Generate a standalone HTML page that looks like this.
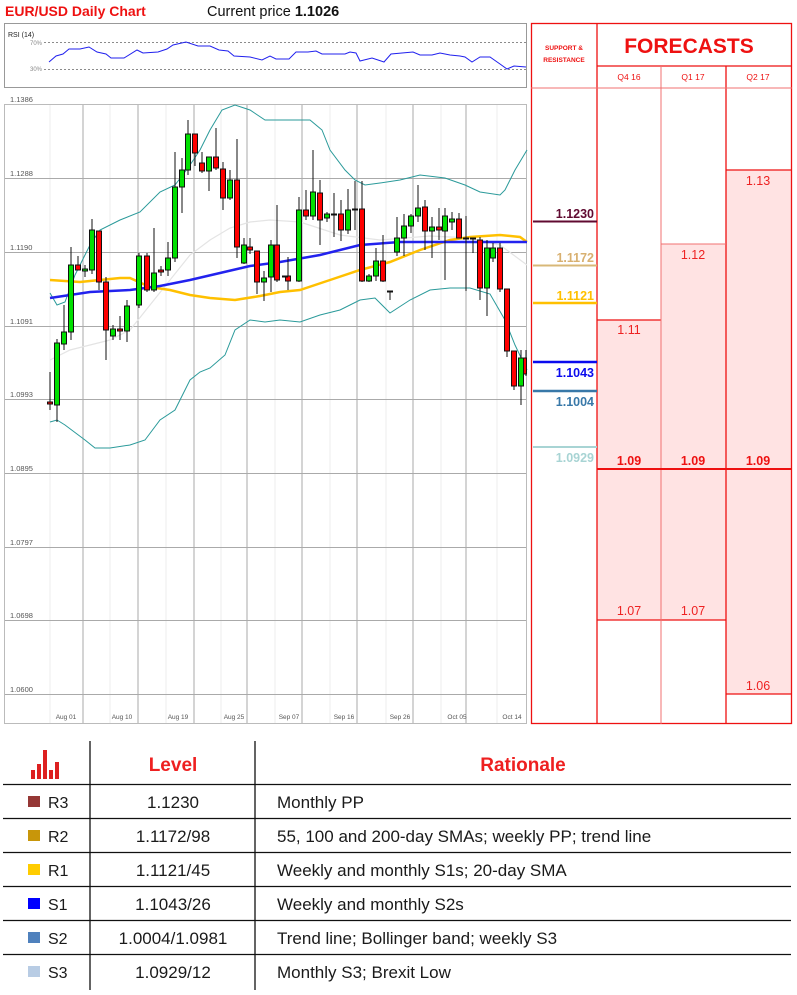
<!DOCTYPE html>
<html><head><meta charset="utf-8"><style>
body{margin:0;background:#fff;width:797px;height:995px;overflow:hidden;font-family:"Liberation Sans",sans-serif}
svg{display:block}
</style></head><body>
<svg width="797" height="995" viewBox="0 0 797 995" xmlns="http://www.w3.org/2000/svg" font-family="Liberation Sans, sans-serif">
<rect width="797" height="995" fill="#fff"/>
<text x="5" y="16" font-size="14" font-weight="bold" fill="#ee1111">EUR/USD Daily Chart</text>
<text x="207" y="16" font-size="14.5" fill="#111">Current price <tspan font-weight="bold">1.1026</tspan></text>
<!-- RSI -->
<rect x="4.5" y="23.5" width="522" height="64" fill="#fff" stroke="#999"/>
<text x="8" y="37" font-size="7" fill="#222">RSI (14)</text>
<text x="30" y="45" font-size="6" fill="#888">70%</text>
<text x="30" y="71" font-size="6" fill="#888">30%</text>
<line x1="44" y1="42.5" x2="526" y2="42.5" stroke="#666" stroke-dasharray="2,2" stroke-width="0.7"/>
<line x1="44" y1="69.5" x2="526" y2="69.5" stroke="#666" stroke-dasharray="2,2" stroke-width="0.7"/>
<polyline fill="none" stroke="#2020ee" stroke-width="1" points="49,62 56,56 63,54 69,49 80,49 89,47 97,52 106,54 111,58 124,58 137,50 143,53 158,52 167,49 173,45 186,42 198,46 210,46 219,50 228,51 234,56 250,57 262,60 270,56 276,59 289,59 296,52 308,52 316,51 322,54 345,54 350,52 356,53 360,61 372,58 384,62 391,54 413,52 420,55 432,55 440,53 450,55 460,56 465,57 472,62 480,57 490,57 500,64 507,69 514,66 526,67"/>
<!-- chart frame -->
<rect x="4.5" y="104.5" width="522" height="619" fill="#fff" stroke="#bbb"/>
<g stroke="#eee" stroke-width="1">
<line x1="50" y1="105" x2="50" y2="723"/><line x1="110" y1="105" x2="110" y2="723"/><line x1="166" y1="105" x2="166" y2="723"/><line x1="221" y1="105" x2="221" y2="723"/><line x1="275" y1="105" x2="275" y2="723"/><line x1="330" y1="105" x2="330" y2="723"/><line x1="386" y1="105" x2="386" y2="723"/><line x1="441" y1="105" x2="441" y2="723"/><line x1="497" y1="105" x2="497" y2="723"/>
</g>
<g stroke="#aaa" stroke-width="1">
<line x1="83" y1="105" x2="83" y2="723"/><line x1="138" y1="105" x2="138" y2="723"/><line x1="194" y1="105" x2="194" y2="723"/><line x1="247" y1="105" x2="247" y2="723"/><line x1="302" y1="105" x2="302" y2="723"/><line x1="357" y1="105" x2="357" y2="723"/><line x1="413" y1="105" x2="413" y2="723"/><line x1="466" y1="105" x2="466" y2="723"/>
<line x1="5" y1="178.5" x2="526" y2="178.5"/><line x1="5" y1="252.5" x2="526" y2="252.5"/><line x1="5" y1="326.5" x2="526" y2="326.5"/><line x1="5" y1="399.5" x2="526" y2="399.5"/><line x1="5" y1="473.5" x2="526" y2="473.5"/><line x1="5" y1="547.5" x2="526" y2="547.5"/><line x1="5" y1="620.5" x2="526" y2="620.5"/><line x1="5" y1="694.5" x2="526" y2="694.5"/>
</g>
<g font-size="7.5" fill="#555">
<text x="10" y="102">1.1386</text><text x="10" y="176">1.1288</text><text x="10" y="250">1.1190</text><text x="10" y="324">1.1091</text><text x="10" y="397">1.0993</text><text x="10" y="471">1.0895</text><text x="10" y="545">1.0797</text><text x="10" y="618">1.0698</text><text x="10" y="692">1.0600</text>
</g>
<g font-size="6.5" fill="#555" text-anchor="middle">
<text x="66" y="719">Aug 01</text><text x="122" y="719">Aug 10</text><text x="178" y="719">Aug 19</text><text x="234" y="719">Aug 25</text><text x="289" y="719">Sep 07</text><text x="344" y="719">Sep 16</text><text x="400" y="719">Sep 26</text><text x="457" y="719">Oct 05</text><text x="512" y="719">Oct 14</text>
</g>
<!-- lines -->
<polyline fill="none" stroke="#e4e4e4" stroke-width="1.2" points="50,360 70,350 90,345 110,340 130,330 150,305 170,280 190,255 210,240 230,228 250,222 270,220 300,222 340,235 380,240 430,236 470,238 500,245 527,265"/>
<polyline fill="none" stroke="#2a9a9a" stroke-width="1" points="50,293 57,305 65,302 75,275 90,245 100,230 120,220 140,212 160,192 175,185 188,168 200,150 210,130 222,110 235,105 250,110 265,120 290,120 310,120 322,130 330,150 345,170 355,180 365,185 380,183 400,180 420,175 445,178 465,185 480,192 500,195 505,190 515,170 527,150"/>
<polyline fill="none" stroke="#2a9a9a" stroke-width="1" points="50,422 57,420 65,425 85,440 95,448 110,448 130,445 145,440 160,420 175,410 190,380 200,372 210,368 225,355 235,330 250,320 265,322 280,320 300,322 320,315 340,310 350,305 360,300 375,298 390,313 410,300 430,290 450,288 470,288 490,294 505,320 515,345 527,370"/>
<polyline fill="none" stroke="#ffc000" stroke-width="2.5" points="50,280 80,282 100,280 120,278 130,278 150,287 170,290 190,295 210,298 235,300 260,296 280,292 300,290 330,280 360,270 390,262 420,250 450,240 470,237 500,235 520,237 527,242"/>
<polyline fill="none" stroke="#2222ee" stroke-width="2.5" points="50,298 90,292 130,290 160,286 190,280 220,273 250,266 280,262 320,255 360,245 400,242 440,242 470,242 527,242"/>
<!-- candles -->
<g stroke="#111" stroke-width="1">
<line x1="50" y1="372" x2="50" y2="410"/><line x1="57" y1="339" x2="57" y2="422"/><line x1="64" y1="305" x2="64" y2="350"/><line x1="71" y1="247" x2="71" y2="340"/><line x1="78" y1="256" x2="78" y2="270"/><line x1="85" y1="265" x2="85" y2="277"/><line x1="92" y1="219" x2="92" y2="274"/><line x1="99" y1="231" x2="99" y2="290"/><line x1="106" y1="277" x2="106" y2="360"/><line x1="113" y1="325" x2="113" y2="340"/><line x1="120" y1="316" x2="120" y2="340"/><line x1="127" y1="300" x2="127" y2="342"/><line x1="139" y1="253" x2="139" y2="308"/><line x1="147" y1="253" x2="147" y2="292"/><line x1="154" y1="228" x2="154" y2="292"/><line x1="161" y1="266" x2="161" y2="276"/><line x1="168" y1="242" x2="168" y2="276"/><line x1="175" y1="152" x2="175" y2="262"/><line x1="182" y1="158" x2="182" y2="213"/><line x1="188" y1="120" x2="188" y2="175"/><line x1="195" y1="134" x2="195" y2="166"/><line x1="202" y1="152" x2="202" y2="173"/><line x1="209" y1="157" x2="209" y2="191"/><line x1="216" y1="128" x2="216" y2="170"/><line x1="223" y1="162" x2="223" y2="210"/><line x1="230" y1="170" x2="230" y2="200"/><line x1="237" y1="139" x2="237" y2="258"/><line x1="244" y1="238" x2="244" y2="264"/><line x1="250" y1="238" x2="250" y2="254"/><line x1="257" y1="251" x2="257" y2="294"/><line x1="264" y1="271" x2="264" y2="301"/><line x1="271" y1="240" x2="271" y2="292"/><line x1="277" y1="205" x2="277" y2="282"/><line x1="288" y1="257" x2="288" y2="290"/><line x1="299" y1="197" x2="299" y2="282"/><line x1="306" y1="190" x2="306" y2="220"/><line x1="313" y1="150" x2="313" y2="220"/><line x1="320" y1="180" x2="320" y2="245"/><line x1="327" y1="212" x2="327" y2="222"/><line x1="334" y1="193" x2="334" y2="237"/><line x1="341" y1="200" x2="341" y2="241"/><line x1="348" y1="189" x2="348" y2="234"/><line x1="355" y1="181" x2="355" y2="230"/><line x1="362" y1="181" x2="362" y2="282"/><line x1="369" y1="274" x2="369" y2="282"/><line x1="376" y1="248" x2="376" y2="281"/><line x1="383" y1="235" x2="383" y2="282"/><line x1="390" y1="292" x2="390" y2="300"/><line x1="397" y1="217" x2="397" y2="256"/><line x1="404" y1="214" x2="404" y2="256"/><line x1="411" y1="214" x2="411" y2="233"/><line x1="418" y1="185" x2="418" y2="222"/><line x1="425" y1="200" x2="425" y2="250"/><line x1="432" y1="217" x2="432" y2="258"/><line x1="439" y1="208" x2="439" y2="240"/><line x1="445" y1="208" x2="445" y2="280"/><line x1="452" y1="212" x2="452" y2="230"/><line x1="459" y1="213" x2="459" y2="238"/><line x1="466" y1="216" x2="466" y2="291"/><line x1="473" y1="238" x2="473" y2="253"/><line x1="480" y1="237" x2="480" y2="300"/><line x1="487" y1="240" x2="487" y2="316"/><line x1="493" y1="243" x2="493" y2="262"/><line x1="500" y1="243" x2="500" y2="292"/><line x1="507" y1="289" x2="507" y2="357"/><line x1="514" y1="351" x2="514" y2="390"/><line x1="521" y1="350" x2="521" y2="405"/><line x1="526" y1="350" x2="526" y2="376"/>
</g>
<g stroke="#111" stroke-width="1" fill="#ff0000">
<rect x="47.5" y="402" width="5" height="2"/><rect x="75.5" y="265" width="5" height="5"/><rect x="96.5" y="231" width="5" height="51"/><rect x="103.5" y="282" width="5" height="48"/><rect x="117.5" y="329" width="5" height="2"/><rect x="144.5" y="256" width="5" height="34"/><rect x="158.5" y="270" width="5" height="2"/><rect x="192.5" y="134" width="5" height="19"/><rect x="199.5" y="163" width="5" height="8"/><rect x="213.5" y="157" width="5" height="11"/><rect x="220.5" y="169" width="5" height="29"/><rect x="234.5" y="180" width="5" height="67"/><rect x="247.5" y="247" width="5" height="3"/><rect x="254.5" y="251" width="5" height="31"/><rect x="274.5" y="245" width="5" height="35"/><rect x="285.5" y="276" width="5" height="5"/><rect x="303.5" y="210" width="5" height="6"/><rect x="317.5" y="193" width="5" height="27"/><rect x="338.5" y="214" width="5" height="16"/><rect x="359.5" y="209" width="5" height="72"/><rect x="380.5" y="261" width="5" height="20"/><rect x="422.5" y="207" width="5" height="24"/><rect x="436.5" y="227" width="5" height="3"/><rect x="456.5" y="219" width="5" height="19"/><rect x="477.5" y="240" width="5" height="48"/><rect x="497.5" y="248" width="5" height="41"/><rect x="504.5" y="289" width="5" height="62"/><rect x="511.5" y="351" width="5" height="35"/><rect x="523.5" y="358" width="3" height="16"/>
</g>
<g stroke="#111" stroke-width="1" fill="#00e000">
<rect x="54.5" y="343" width="5" height="62"/><rect x="61.5" y="332" width="5" height="12"/><rect x="68.5" y="265" width="5" height="67"/><rect x="82.5" y="269" width="5" height="2"/><rect x="89.5" y="230" width="5" height="40"/><rect x="110.5" y="329" width="5" height="7"/><rect x="124.5" y="306" width="5" height="25"/><rect x="136.5" y="256" width="5" height="49"/><rect x="151.5" y="273" width="5" height="17"/><rect x="165.5" y="258" width="5" height="12"/><rect x="172.5" y="187" width="5" height="71"/><rect x="179.5" y="170" width="5" height="17"/><rect x="185.5" y="134" width="5" height="36"/><rect x="206.5" y="157" width="5" height="14"/><rect x="227.5" y="180" width="5" height="18"/><rect x="241.5" y="245" width="5" height="18"/><rect x="261.5" y="278" width="5" height="4"/><rect x="268.5" y="245" width="5" height="32"/><rect x="282.5" y="276" width="5" height="1"/><rect x="296.5" y="210" width="5" height="71"/><rect x="310.5" y="192" width="5" height="24"/><rect x="324.5" y="214" width="5" height="4"/><rect x="331.5" y="214" width="5" height="1"/><rect x="345.5" y="210" width="5" height="20"/><rect x="352.5" y="209" width="5" height="1"/><rect x="366.5" y="276" width="5" height="5"/><rect x="373.5" y="261" width="5" height="15"/><rect x="387.5" y="291" width="5" height="1"/><rect x="394.5" y="238" width="5" height="14"/><rect x="401.5" y="226" width="5" height="12"/><rect x="408.5" y="216" width="5" height="10"/><rect x="415.5" y="208" width="5" height="8"/><rect x="429.5" y="227" width="5" height="4"/><rect x="442.5" y="216" width="5" height="15"/><rect x="449.5" y="219" width="5" height="3"/><rect x="463.5" y="238" width="5" height="1"/><rect x="470.5" y="238" width="5" height="1"/><rect x="484.5" y="248" width="5" height="40"/><rect x="490.5" y="248" width="5" height="10"/><rect x="518.5" y="358" width="5" height="28"/>
</g>
<!-- right panel -->
<rect x="726" y="170" width="66" height="524" fill="#ffe3e3"/>
<rect x="661" y="244" width="65" height="376" fill="#ffe3e3"/>
<rect x="597" y="320" width="64" height="300" fill="#ffe3e3"/>
<g stroke="#ee1111" stroke-width="1.3" fill="none">
<rect x="531.5" y="23.5" width="260" height="700"/>
<line x1="597" y1="23" x2="597" y2="724"/><line x1="726" y1="66" x2="726" y2="724"/>
<line x1="597" y1="66" x2="792" y2="66"/>
<line x1="726" y1="170" x2="792" y2="170"/><line x1="597" y1="320" x2="661" y2="320"/>
<line x1="597" y1="620" x2="726" y2="620"/><line x1="726" y1="694" x2="792" y2="694"/>
</g>
<g stroke="#f07070" stroke-width="1" fill="none">
<line x1="661" y1="66" x2="661" y2="724"/><line x1="531" y1="88" x2="792" y2="88"/><line x1="661" y1="244" x2="726" y2="244"/>
</g>
<line x1="597" y1="469" x2="792" y2="469" stroke="#ee1111" stroke-width="2"/>
<text x="564" y="50" font-size="6.5" font-weight="bold" fill="#ee1111" text-anchor="middle">SUPPORT &amp;</text>
<text x="564" y="62" font-size="6.5" font-weight="bold" fill="#ee1111" text-anchor="middle">RESISTANCE</text>
<text x="689" y="53" font-size="21" font-weight="bold" fill="#ee1111" text-anchor="middle">FORECASTS</text>
<g font-size="8.5" fill="#ee1111" text-anchor="middle">
<text x="629" y="80">Q4 16</text><text x="693" y="80">Q1 17</text><text x="758" y="80">Q2 17</text>
</g>
<g font-size="12.5" fill="#ee2222" text-anchor="middle">
<text x="629" y="334">1.11</text><text x="693" y="259">1.12</text><text x="758" y="185">1.13</text>
<text x="629" y="615">1.07</text><text x="693" y="615">1.07</text><text x="758" y="690">1.06</text>
</g>
<g font-size="12.5" font-weight="bold" fill="#ee1111" text-anchor="middle">
<text x="629" y="465">1.09</text><text x="693" y="465">1.09</text><text x="758" y="465">1.09</text>
</g>
<line x1="533" y1="221.5" x2="597" y2="221.5" stroke="#600a30" stroke-width="2"/>
<line x1="533" y1="265.5" x2="597" y2="265.5" stroke="#d8b878" stroke-width="2"/>
<line x1="533" y1="303" x2="597" y2="303" stroke="#ffc000" stroke-width="2.5"/>
<line x1="533" y1="362" x2="597" y2="362" stroke="#0a0aee" stroke-width="2.5"/>
<line x1="533" y1="391" x2="597" y2="391" stroke="#3878a8" stroke-width="2.5"/>
<line x1="533" y1="447" x2="597" y2="447" stroke="#a8d4d4" stroke-width="2"/>
<g font-size="12.5" font-weight="bold" text-anchor="end">
<text x="594" y="218" fill="#600a30">1.1230</text>
<text x="594" y="262" fill="#d8b070">1.1172</text>
<text x="594" y="300" fill="#ffc000">1.1121</text>
<text x="594" y="377" fill="#0a0aee">1.1043</text>
<text x="594" y="406" fill="#3878a8">1.1004</text>
<text x="594" y="462" fill="#a8d4d4">1.0929</text>
</g>
<!-- table -->
<g fill="#dd2020">
<rect x="31" y="770" width="4" height="9"/><rect x="37" y="764" width="4" height="15"/><rect x="43" y="750" width="4" height="29"/><rect x="49" y="770" width="4" height="9"/><rect x="55" y="762" width="4" height="17"/>
</g>
<text x="173" y="771" font-size="19" font-weight="bold" fill="#ee2020" text-anchor="middle">Level</text>
<text x="523" y="771" font-size="19" font-weight="bold" fill="#ee2020" text-anchor="middle">Rationale</text>
<g stroke="#111" stroke-width="1.3">
<line x1="90" y1="741" x2="90" y2="990"/><line x1="255" y1="741" x2="255" y2="990"/>
<line x1="3" y1="784.5" x2="791" y2="784.5"/><line x1="3" y1="818.5" x2="791" y2="818.5"/><line x1="3" y1="852.5" x2="791" y2="852.5"/><line x1="3" y1="886.5" x2="791" y2="886.5"/><line x1="3" y1="920.5" x2="791" y2="920.5"/><line x1="3" y1="954.5" x2="791" y2="954.5"/>
</g>
<rect x="28" y="796" width="12" height="11" fill="#953735"/>
<rect x="28" y="830" width="12" height="11" fill="#c8960a"/>
<rect x="28" y="864" width="12" height="11" fill="#ffcc00"/>
<rect x="28" y="898" width="12" height="11" fill="#0000ff"/>
<rect x="28" y="932" width="12" height="11" fill="#4f81bd"/>
<rect x="28" y="966" width="12" height="11" fill="#b8cce4"/>
<g font-size="16" fill="#1a1a1a">
<text x="48" y="808">R3</text><text x="48" y="842">R2</text><text x="48" y="876">R1</text><text x="48" y="910">S1</text><text x="48" y="944">S2</text><text x="48" y="978">S3</text>
</g>
<g font-size="17" fill="#1a1a1a" text-anchor="middle">
<text x="173" y="808">1.1230</text><text x="173" y="842">1.1172/98</text><text x="173" y="876">1.1121/45</text><text x="173" y="910">1.1043/26</text><text x="173" y="944">1.0004/1.0981</text><text x="173" y="978">1.0929/12</text>
</g>
<g font-size="17" fill="#1a1a1a">
<text x="277" y="808">Monthly PP</text>
<text x="277" y="842">55, 100 and 200-day SMAs; weekly PP; trend line</text>
<text x="277" y="876">Weekly and monthly S1s; 20-day SMA</text>
<text x="277" y="910">Weekly and monthly S2s</text>
<text x="277" y="944">Trend line; Bollinger band; weekly S3</text>
<text x="277" y="978">Monthly S3; Brexit Low</text>
</g>
</svg>
</body></html>
